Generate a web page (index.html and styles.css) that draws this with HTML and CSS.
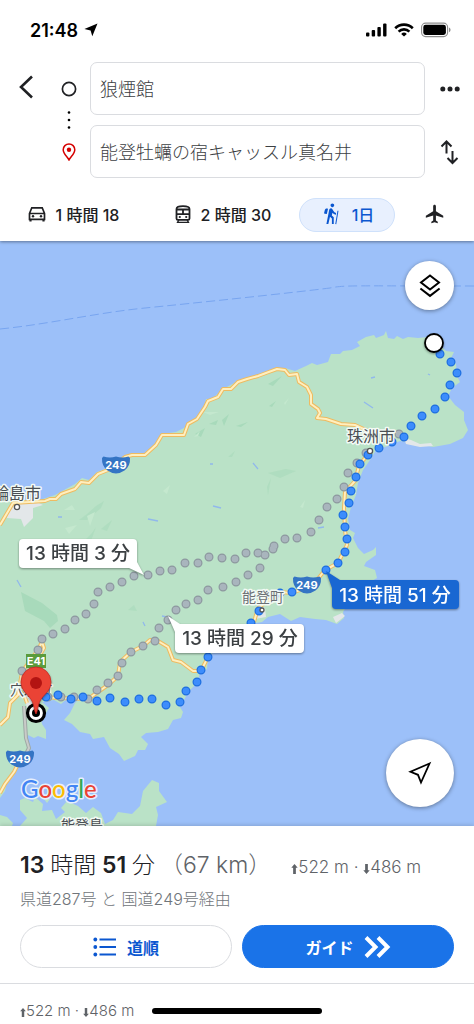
FILE: index.html
```html
<!DOCTYPE html>
<html lang="ja">
<head>
    <meta charset="UTF-8">
    <meta name="viewport" content="width=device-width, initial-scale=1.0">
    <title>経路</title>
    <link rel="stylesheet" href="styles.css">
</head>
<body>
    <header class="top">
        <div class="status-bar">
            <div class="status-time">
                <span>21:48</span>
                <svg width="14" height="14" viewBox="0 0 14 14"><path d="M13.500 0.500 8.300 13.300 6.600 7.500.4 6z" fill="#000"/></svg>
            </div>
            <div class="status-icons">
                <svg width="21" height="14" viewBox="0 0 21 14">
                    <rect x="0" y="9.500" width="3.400" height="4" rx="1"/>
                    <rect x="5.700" y="7" width="3.400" height="6.500" rx="1"/>
                    <rect x="11.400" y="4" width="3.400" height="9.500" rx="1"/>
                    <rect x="17.100" y="0.500" width="3.400" height="13" rx="1"/>
                </svg>
                <svg width="20" height="14" viewBox="0 0 20 14" fill="none" stroke="#000" stroke-width="2.600">
                    <path d="M1.200 5.200a12.600 12.600 0 0 1 17.600 0"/>
                    <path d="M4.600 8.600a7.700 7.700 0 0 1 10.800 0"/>
                    <path d="M10 13.600 7.200 10.900a4 4 0 0 1 5.600 0z" fill="#000" stroke="none"/>
                </svg>
                <svg width="30" height="16" viewBox="0 0 30 16">
                    <rect x="0.600" y="1.100" width="26" height="13.500" rx="4" fill="none" stroke="#8e8e8e" stroke-width="1.100"/>
                    <rect x="2.300" y="2.800" width="22.600" height="10.100" rx="2.300"/>
                    <path d="M28 5.600c2 .8 2 3.800 0 4.600z" fill="#8e8e8e"/>
                </svg>
            </div>
        </div>

        <form class="search">
            <button type="button" class="icon-btn back" aria-label="戻る">
                <svg width="16" height="26" viewBox="0 0 16 26"><path d="M14 2.500 3 13l11 10.500" fill="none" stroke="#202124" stroke-width="2.600"/></svg>
            </button>
            <label class="marker" for="origin" aria-label="出発地">
                <svg width="16" height="16" viewBox="0 0 16 16"><circle cx="8" cy="8" r="6.600" fill="none" stroke="#202124" stroke-width="1.700"/></svg>
            </label>
            <input type="text" class="field" id="origin" value="狼煙館">
            <button type="button" class="icon-btn" aria-label="その他">
                <svg width="20" height="6" viewBox="0 0 20 6" fill="#202124"><circle cx="2.800" cy="3" r="2.500"/><circle cx="10" cy="3" r="2.500"/><circle cx="17.200" cy="3" r="2.500"/></svg>
            </button>

            <svg class="link-dots" width="4" height="20" viewBox="0 0 4 20"><circle cx="2" cy="2.500" r="1.300"/><circle cx="2" cy="10" r="1.300"/><circle cx="2" cy="17.500" r="1.300"/></svg>
            <label class="marker destination" for="destination" aria-label="目的地">
                <svg width="14" height="18" viewBox="0 0 14 18"><path d="M7 17C5.500 13.800 1.200 11 1.200 6.700a5.800 5.800 0 0 1 11.600 0C12.800 11 8.500 13.800 7 17z" fill="none" stroke="#d50000" stroke-width="1.500"/><circle cx="7" cy="6.700" r="2.200" fill="#d50000"/></svg>
            </label>
            <input type="text" class="field" id="destination" value="能登牡蠣の宿キャッスル真名井">
            <button type="button" class="icon-btn" aria-label="入れ替え">
                <svg width="20" height="26" viewBox="0 0 20 26" fill="none" stroke="#202124" stroke-width="2"><path d="M6.500 14.500V2.500M1.500 7.500l5-5 5 5M12.500 12v12M7.500 19l5 5 5-5"/></svg>
            </button>
        </form>

        <nav class="modes">
            <button type="button" class="mode">
                <svg width="18" height="18" viewBox="0 0 18 18" fill="none" stroke="#202124" stroke-width="1.700">
                    <path d="M1.500 8.500 3.800 2.800h10.400l2.300 5.700v5.800h-15zM1.500 8.500h15"/>
                    <path d="M2.500 14v2.500M15.500 14v2.500" stroke-width="2.200"/>
                    <circle cx="5" cy="11.300" r="1.200" fill="#202124" stroke="none"/><circle cx="13" cy="11.300" r="1.200" fill="#202124" stroke="none"/>
                </svg>
                1 時間 18
            </button>
            <button type="button" class="mode">
                <svg width="16" height="18" viewBox="0 0 16 18" fill="none" stroke="#202124" stroke-width="1.800">
                    <path d="M1.500 13.500V4c0-2 1.700-2.800 6.500-2.800s6.500.8 6.500 2.800v9.500c0 .8-.5 1.300-1.300 1.300H2.800c-.8 0-1.300-.5-1.300-1.300zM2 4.500h12M2 9.200h12M8 4.500v5"/>
                    <path d="m4 14.500-1.500 3h11l-1.500-3" stroke-width="1.400"/>
                    <circle cx="4.800" cy="12" r="1.100" fill="#202124" stroke="none"/><circle cx="11.200" cy="12" r="1.100" fill="#202124" stroke="none"/>
                </svg>
                2 時間 30
            </button>
            <button type="button" class="mode selected">
                <svg width="22" height="22" viewBox="0 0 24 24" fill="#0b57d0"><path d="M13.500 4.500c1.100 0 2-.9 2-2s-.9-2-2-2-2 .9-2 2 .9 2 2 2zM17.500 10.780c-1.230-.37-2.220-1.170-2.800-2.180l-1-1.600c-.41-.65-1.110-1.400-1.840-1.400-.78 0-1.590.9-1.780 1.840S7 23 7 23h2.100l1.800-8 2.100 2v6h2v-7.500l-2.100-2 .6-3c1 1.150 2.410 2.010 4 2.340zM7.430 12.130l-2.120-.41c-.54-.11-.9-.63-.79-1.170l.76-2.930c.21-1.080 1.260-1.790 2.340-1.580l1.160.23z"/><path d="M19.600 8.500 17.200 23" stroke="#0b57d0" stroke-width="1.100"/></svg>
                1日
            </button>
            <button type="button" class="mode" aria-label="飛行機">
                <svg width="22" height="22" viewBox="0 0 24 24" fill="#202124"><path d="M21 16v-2l-8-5V3.500c0-.83-.67-1.500-1.500-1.500S10 2.670 10 3.500V9l-8 5v2l8-2.500V19l-2 1.500V22l3.500-1 3.500 1v-1.500L13 19v-5.500l8 2.500z"/></svg>
            </button>
        </nav>
    </header>

    <main class="map">
        <svg class="map-canvas" viewBox="0 241 474 585" preserveAspectRatio="xMidYMid slice">
            <defs>
                <path id="north-road" d="M0 525 13 503 45 501 50 499 56 499 61 494 75 489 81 482 89 483 98 474 108 470 125 457 132 455 145 455 156 445 162 435 184 435 188 424 197 419 205 407 208 401 218 397 223 389 231 389 238 382 247 379 258 376 266 373 277 369 285 370 289 375 297 374 299 382 307 387 311 395 311 404 318 409 320 413 317 418 326 419 341 424 355 425 368 431 372 438"/>
                <path id="coast-road" d="M371 450 359 466 355 481 345 492 344 508 345 530 347 545 338 563 325 570 313 585 292 593 280 592 258 608 254 622"/>
                <path id="mid-road" d="M40 697 60 698 88 699 108 685 118 676 120 662 131 652 143 646 150 640 158 641 168 647 173 660 181 662 193 671 201 671 208 657"/>
                <path id="west-road" d="M0 725 8 717 10 703 18 695 22 672 38 650 43 640M42 642 44 648 36 662 27 666M19 690 25 697 27 703"/>
                <path id="gray-road" d="M24 706 26 738 29 748 25 756"/>
                <path id="south-road" d="M0 793 5 784 14 772 18 764"/>
                <path id="dots-gray" d="M399 434h0M366 453h0M357 463h0M348 473h0M344 487h0M337 499h0M327 507h0M319 520h0M311 532h0M297 538h0M285 539h0M273 549h0M274 546h0M265 555h0M258 553h0M246 553h0M235 559h0M260 568h0M248 575h0M236 582h0M222 558h0M209 557h0M198 563h0M185 563h0M172 570h0M160 571h0M148 575h0M134 576h0M122 582h0M110 587h0M98 592h0M94 604h0M86 614h0M75 620h0M65 629h0M53 634h0M42 639h0M38 650h0M22 671h0M223 587h0M208 590h0M198 600h0M186 604h0M176 610h0M168 620h0M159 628h0M155 641h0M143 646h0M131 652h0M122 663h0M118 676h0M108 683h0M97 690h0M88 699h0M74 697h0M61 697h0M48 697h0"/>
                <path id="dots-blue" d="M440 354h0M451 362h0M457 373h0M450 385h0M445 397h0M435 409h0M422 416h0M411 426h0M404 437h0M392 442h0M379 448h0M368 455h0M360 464h0M356 477h0M351 491h0M349 503h0M343 515h0M345 527h0M347 539h0M345 552h0M338 563h0M326 570h0M292 592h0M280 593h0M259 611h0M251 623h0M208 657h0M201 670h0M197 682h0M186 691h0M180 702h0M166 705h0M152 699h0M139 699h0M125 702h0M110 698h0M97 701h0M83 697h0M71 699h0M58 695h0M46 697h0"/>
                <path id="shield" d="M-12.500-8.500Q-6-6.600 0-8.500 6-6.600 12.500-8.500L14-7Q14.500 1 8.500 5.500 4 8.500 0 8.500T-8.500 5.500Q-14.500 1-14-7z" fill="#3474c4"/>
            </defs>

            <rect y="241" width="474" height="585" fill="#9cc0f9"/>
            <path d="M0 329C50 324 95 313 145 308S290 293 330 288C345 285 350 286 474 286" fill="none" stroke="#78a5f0" stroke-dasharray="9 4"/>

            <!-- land -->
            <g fill="#bae2c7">
                <path d="M0 494 13 500 40 500 55 495 75 484 82 478 89 480 97 472 108 468 125 455 145 453 156 443 162 434 176 432 184 428 188 423 196 418 205 405 206 399 212 399 223 389 238 381 265 372 285 368 295 371 306 366 312 363 317 365 328 362 331 354 340 354 343 351 352 350 360 346 357 342 366 337 374 335 376 338 384 335 386 331 388 338 394 339 397 336 403 339 408 337 418 338 428 337 440 345 446 351 454 352 451 358 456 364 457 376 460 382 452 388 448 396 455 405 464 412 464 420 468 430 463 438 450 444 433 447 415 443 400 441 388 446 376 450 370 460 363 470 358 483 356 495 351 507 348 519 350 530 355 533 353 538 358 548 364 554 373 550 376 547 376 555 366 562 364 566 375 570 377 578 370 582 372 590 355 596 348 604 343 612 344 618 337 624 326 620 315 619 300 617 291 621 280 614 268 617 262 622 250 624 240 633 225 642 215 650 208 658 207 669 200 673 197 683 188 692 184 700 178 704 183 712 181 718 173 720 168 729 158 732 146 733 141 737 148 744 145 750 138 750 135 756 124 761 119 754 110 748 104 737 93 739 90 734 80 732 72 724 64 720 70 713 75 703 80 698 68 698 61 704 54 700 42 702 49 708 46 713 40 713 42 724 46 730 46 739 38 736 34 738 28 735 27 742 29 751 24 762 17 765 13 777 7 781 5 791 0 798z"/>
                <path d="M20 826 27 818 20 810 20 800 25 798 33 802 35 797 43 804 42 811 52 810 56 819 65 812 61 808 67 801 78 806 86 813 93 807 101 813 105 824 113 820 118 812 132 814 140 806 143 791 152 780 159 783 159 791 167 802 156 807 158 815 156 826z"/>
                <path d="M0 815 7 817 13 823 12 826 0 826zM43 798 50 799 47 803zM158 696 164 693 173 697 170 704z"/>
            </g>

            <!-- relief -->
            <g fill="#a8dabb">
                <path d="M21 592 42 603 57 615 58 621 50 628 44 621 25 611z"/>
                <path d="M195 434 205 428 201 437zM222 420 229 414 224 426zM268 384 282 376 273 386zM209 424 218 420 216 425zM269 406 276 401 272 407zM236 426 248 422 241 427z"/>
                <path d="M87 514 96 506 104 501 101 508 87 520 79 520zM268 473 286 469 296 471 280 478zM267 487 271 478 268 495zM128 610 134 605 137 611zM228 457 235 451 232 457zM101 529 112 520 107 531z" opacity=".6"/>
                <path d="M85 540 92 533 96 527 91 541zM62 552 71 545 68 553z" opacity=".6"/>
            </g>
            <g fill="#c4e8ce">
                <path d="M203 412 219 412 210 415zM194 437 200 431 198 436zM64 510 72 505 75 510zM87 516 95 512 90 526zM300 507 305 500 303 508zM163 491 170 485 167 494zM284 403 289 398 285 405zM65 528 77 525 69 534z"/>
            </g>
            <g stroke="#91b8ec" stroke-width="1.300" fill="none">
                <path d="m364 402 9 6M148 519l5 1 5 1M213 506l8 2M17 580l4 7M58 517l4 0M253 463l5 6M371 378l4-1M428 374l2 1M210 464l3 0M318 528l6-1M143 622l2 4M162 616l5 1"/>
            </g>
            <g fill="#e3e7e9">
                <path d="M8 508 17 503 35 501 43 505 33 508 33 518 24 527 21 519 7 518z"/>
                <path d="M404 438 411 440 420 444 431 443 433 446 420 447 406 444zM259 606 265 608 266 617 255 619zM333 617 342 613 345 616 336 623zM352 484 356 494 351 492zM24 700 31 698 34 706 29 711z"/>
            </g>

            <!-- roads -->
            <g fill="none" stroke-linejoin="round">
                <g stroke="#eebb61" stroke-width="4"><use href="#north-road"/><use href="#coast-road"/><use href="#mid-road"/><use href="#west-road"/><use href="#south-road"/></g>
                <g stroke="#ffefbf" stroke-width="2"><use href="#north-road"/><use href="#coast-road"/><use href="#mid-road"/><use href="#west-road"/><use href="#south-road"/></g>
                <use href="#gray-road" stroke="#9ea9a5" stroke-width="4"/>
                <use href="#gray-road" stroke="#c9cbc8" stroke-width="2"/>
            </g>

            <!-- place names under the route -->
            <g class="place">
                <text class="small" x="10" y="695">穴水町</text>
            </g>

            <g stroke-linecap="round">
                <use href="#dots-gray" stroke="#8d989f" stroke-width="9"/>
                <use href="#dots-gray" stroke="#a9b5bd" stroke-width="6.600"/>
                <use href="#dots-blue" stroke="#1e6fdf" stroke-width="9"/>
                <use href="#dots-blue" stroke="#3d8dfc" stroke-width="6.600"/>
            </g>
            <g fill="#fff" stroke="#555" stroke-width="1.300">
                <circle cx="17" cy="507" r="2.600"/><circle cx="370" cy="451" r="2.600"/><circle cx="262" cy="610" r="2"/>
            </g>

            <g class="place">
                <text x="-7" y="499">輪島市</text>
                <text x="347" y="442">珠洲市</text>
                <text class="small faded" x="242" y="602">能登町</text>
                <text class="small" x="61" y="830">能登島</text>
            </g>

            <!-- road numbers -->
            <g class="road-no">
                <use href="#shield" x="116" y="465"/><text x="116" y="469">249</text>
                <use href="#shield" x="307" y="585"/><text x="307" y="589">249</text>
                <use href="#shield" x="20" y="759"/><text x="20" y="763">249</text>
                <rect x="26" y="654" width="20" height="14" fill="#5b9b3c"/><text x="36" y="665">E41</text>
            </g>

            <!-- origin and destination -->
            <circle class="shadow" cx="434" cy="343" r="9" fill="#fff" stroke="#000" stroke-width="1.800"/>
            <circle cx="36" cy="713" r="8.500" fill="#fff" stroke="#000" stroke-width="3.200"/>
            <circle cx="36" cy="713" r="4"/>
            <path class="shadow" d="M36 714C34.500 712 34.500 707 32.500 702 29.500 695 21 691.500 21 682a15 15 0 0 1 30 0C51 691.500 42.500 695 39.500 702 37.500 707 37.500 712 36 714z" fill="#ea4335" stroke="#c5221f" stroke-width="0.700"/>
            <circle cx="36" cy="683" r="6" fill="#b31412"/>

            <!-- route times -->
            <g class="callout shadow">
                <path d="M23 539H133Q137 539 137 543V562L144 575 129 568H23Q19 568 19 564V543Q19 539 23 539z"/>
                <text x="78" y="560">13 時間 3 分</text>
            </g>
            <g class="callout shadow">
                <path d="M180 624 168 616 175 632V649Q175 653 179 653H300Q304 653 304 649V628Q304 624 300 624z"/>
                <text x="240" y="645">13 時間 29 分</text>
            </g>
            <g class="callout active shadow">
                <path d="M340 580 326 571 332 588V605Q332 609 336 609H455Q459 609 459 605V584Q459 580 455 580z"/>
                <text x="395" y="602">13 時間 51 分</text>
            </g>

            <text class="google" x="21" y="798"><tspan fill="#4285f4">G</tspan><tspan fill="#ea4335">o</tspan><tspan fill="#fbbc04">o</tspan><tspan fill="#4285f4">g</tspan><tspan fill="#34a853">l</tspan><tspan fill="#ea4335">e</tspan></text>
        </svg>

        <button type="button" class="fab layers" aria-label="レイヤ">
            <svg width="24" height="24" viewBox="0 0 24 24" fill="none" stroke="#000" stroke-width="2"><path d="m12 1.500 9 7-9 7-9-7zM2.400 14.500l9.600 7.400 9.600-7.400"/></svg>
        </button>
        <button type="button" class="fab locate" aria-label="現在地">
            <svg width="24" height="24" viewBox="0 0 24 24" fill="none" stroke="#000" stroke-width="1.800"><path d="M21.500 2.500 2.500 10.800 10 13.800l3 7.700z"/></svg>
        </button>
    </main>

    <section class="sheet">
        <div class="summary">
            <h1 class="duration">13 <span>時間</span> 51 <span>分</span></h1>
            <span class="distance">（67 km）</span>
            <span class="climb">
                <svg width="7" height="10" viewBox="0 0 7 11"><path d="M3.500 0 7 4H5v7H2V4H0z"/></svg>522 m ·
                <svg width="7" height="10" viewBox="0 0 7 11"><path d="M3.500 11 7 7H5V0H2v7H0z"/></svg>486 m
            </span>
        </div>
        <p class="via">県道287号 と 国道249号経由</p>
        <div class="actions">
            <button type="button" class="action">
                <svg width="24" height="20" viewBox="0 0 24 20" fill="#0b57d0"><circle cx="2.300" cy="2.500" r="1.900"/><circle cx="2.300" cy="10" r="1.900"/><circle cx="2.300" cy="17.500" r="1.900"/><path d="M6.500 1.400H23v2.200H6.500zM6.500 8.900H23v2.200H6.500zM6.500 16.400H23v2.200H6.500z"/></svg>
                道順
            </button>
            <button type="button" class="action primary">
                ガイド
                <svg width="27" height="24" viewBox="0 0 27 24" fill="none" stroke="#fff" stroke-width="4"><path d="m2 2.500 9.500 9.500L2 21.500M14 2.500l9.500 9.500-9.500 9.500"/></svg>
            </button>
        </div>
        <div class="more">
            <span class="climb">
                <svg width="6" height="9" viewBox="0 0 7 11"><path d="M3.500 0 7 4H5v7H2V4H0z"/></svg>522 m ·
                <svg width="6" height="9" viewBox="0 0 7 11"><path d="M3.500 11 7 7H5V0H2v7H0z"/></svg>486 m
            </span>
            <div class="home-bar"></div>
        </div>
    </section>
</body>
</html>
```

FILE: styles.css
```css
* {
    box-sizing: border-box;
}
body {
    margin: 0;
    min-height: 100vh;
    display: flex;
    flex-direction: column;
    background: #fff;
    color: #202124;
    font-family: Inter, "Noto Sans CJK JP", sans-serif;
}
button {
    font-family: inherit;
    color: inherit;
    background: none;
    border: none;
    padding: 0;
    cursor: pointer;
}
svg {
    flex: none;
}

/* header */
.top {
    position: relative;
    z-index: 1;
    box-shadow: 0 1px 3px rgba(0, 0, 0, 0.4);
    background: #fff;
}
.status-bar {
    display: flex;
    justify-content: space-between;
    align-items: center;
    height: 62px;
    padding: 0 23px 2px 30px;
}
.status-time {
    display: flex;
    align-items: center;
    gap: 6px;
    font-size: 18px;
    font-weight: 600;
    color: #000;
}
.status-icons {
    display: flex;
    align-items: center;
    gap: 7px;
}
.search {
    display: grid;
    grid-template-columns: 48px 42px 1fr 49px;
    row-gap: 10px;
    align-items: center;
    position: relative;
}
.icon-btn,
.marker {
    display: flex;
    align-items: center;
    justify-content: center;
}
.back {
    padding: 0 0 4px 4px;
}
.destination {
    grid-column: 2;
}
.link-dots {
    position: absolute;
    left: 67px;
    top: 48px;
}
.field {
    min-width: 0;
    height: 53px;
    padding: 0 9px 2px;
    border: 1px solid #dadce0;
    border-radius: 7px;
    background: #fff;
    color: #3c4043;
    font-family: inherit;
    font-size: 18px;
    font-weight: 300;
}
.modes {
    display: grid;
    grid-template-columns: 147px 1fr 96px 79px;
    padding: 20px 0 9px;
}
.mode {
    display: flex;
    align-items: center;
    justify-content: center;
    gap: 10px;
    height: 34px;
    padding-bottom: 2px;
    font-size: 16px;
    font-weight: 500;
    white-space: nowrap;
}
.selected {
    border: 1px solid #cfe1fb;
    border-radius: 17px;
    background: #e8f0fe;
    color: #0b57d0;
}

/* map */
.map {
    position: relative;
    flex: 1;
    min-height: 400px;
    overflow: hidden;
    background: #9cc0f9;
}
.map-canvas {
    position: absolute;
    width: 100%;
    height: 100%;
}
.place {
    font-size: 16px;
    fill: #4a4f54;
    stroke: #f3faf5;
    stroke-width: 3px;
    stroke-linejoin: round;
    paint-order: stroke;
}
.small {
    font-size: 14px;
}
.faded {
    fill: #6b7075;
}
.road-no {
    font-size: 11px;
    font-weight: 700;
    fill: #fff;
    text-anchor: middle;
}
.callout {
    font-size: 19px;
    font-weight: 500;
    fill: #fff;
    text-anchor: middle;
}
.callout text {
    fill: #3c4043;
}
.active text {
    fill: #fff;
}
.active {
    fill: #1967d2;
}
.shadow {
    filter: drop-shadow(0 1px 1px rgba(0, 0, 0, 0.4));
}
.google {
    font-family: Lato, sans-serif;
    font-size: 24px;
    font-weight: 500;
    stroke: #e6effc;
    stroke-width: 3px;
    stroke-linejoin: round;
    paint-order: stroke;
}
.fab {
    position: absolute;
    right: 20px;
    display: flex;
    align-items: center;
    justify-content: center;
    border-radius: 50%;
    background: #fff;
    box-shadow: 0 1px 4px rgba(0, 0, 0, 0.4);
}
.layers {
    top: 20px;
    width: 49px;
    height: 49px;
}
.locate {
    bottom: 19px;
    width: 68px;
    height: 68px;
}

/* bottom sheet */
.sheet {
    position: relative;
    background: #fff;
    box-shadow: 0 -1px 4px rgba(0, 0, 0, 0.15);
}
.summary {
    display: flex;
    align-items: baseline;
    height: 56px;
    padding: 22px 20px 0;
    line-height: 34px;
    white-space: nowrap;
}
.duration {
    margin: 0;
    font-size: 23px;
    font-weight: 600;
}
.duration span {
    font-weight: 300;
}
.distance {
    margin-left: 5px;
    font-size: 23px;
    font-weight: 300;
    color: #5f6368;
}
.climb {
    font-size: 17px;
    font-weight: 300;
    color: #5f6368;
    fill: #5f6368;
}
.climb svg {
    vertical-align: -1px;
}
.summary .climb {
    margin-left: 20px;
}
.via {
    margin: 5px 20px 0;
    font-size: 16px;
    font-weight: 300;
    line-height: 24px;
    color: #70757a;
}
.actions {
    display: grid;
    grid-template-columns: 1fr 1fr;
    gap: 10px;
    padding: 14px 20px 15px;
    border-bottom: 1px solid #dadce0;
}
.action {
    display: flex;
    align-items: center;
    justify-content: center;
    gap: 10px;
    height: 43px;
    border: 1px solid #dadce0;
    border-radius: 22px;
    color: #0b57d0;
    font-size: 16px;
    font-weight: 600;
}
.primary {
    border-color: #1a73e8;
    background: #1a73e8;
    color: #fff;
}
.more {
    position: relative;
    height: 40px;
    padding: 14px 20px 0;
    line-height: 24px;
}
.more .climb {
    font-size: 15px;
}
.home-bar {
    position: absolute;
    left: 32%;
    right: 32%;
    bottom: 10px;
    height: 6px;
    border-radius: 3px;
    background: #000;
}
```
